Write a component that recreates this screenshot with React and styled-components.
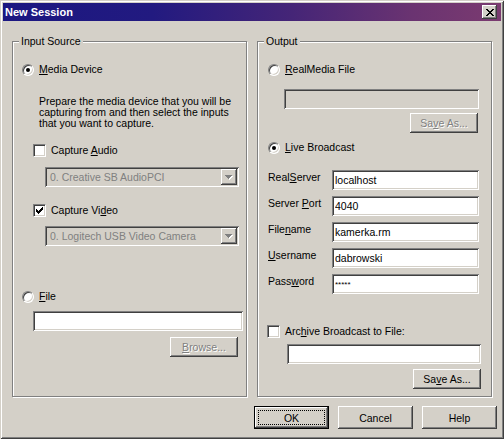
import React from "react";
import styled, { createGlobalStyle, css } from "styled-components";

const face = "#d4d0c8";
const shade = "#808080";
const dark = "#404040";
const light = "#ffffff";

const GlobalStyle = createGlobalStyle`
  html, body { margin: 0; padding: 0; background: ${face}; }
  body {
    font-family: "Liberation Sans", Arial, sans-serif;
    font-size: 10.5px;
    color: #000;
  }
  * { box-sizing: border-box; }
`;

const raised = css`
  background: ${face};
  box-shadow: inset -1px -1px 0 ${dark}, inset 1px 1px 0 ${light},
    inset -2px -2px 0 ${shade}, inset 2px 2px 0 ${face};
`;

const sunken = css`
  box-shadow: inset 1px 1px 0 ${shade}, inset -1px -1px 0 ${light},
    inset 2px 2px 0 ${dark}, inset -2px -2px 0 ${face};
`;

const disabledText = css`
  color: ${shade};
  text-shadow: 1px 1px 0 ${light};
`;

const Window = styled.div`
  width: 504px;
  height: 439px;
  padding: 3px;
  background: ${face};
  box-shadow: inset 1px 1px 0 ${face}, inset -1px -1px 0 ${dark},
    inset 2px 2px 0 ${light}, inset -2px -2px 0 ${shade};
  display: flex;
  flex-direction: column;
`;

const TitleBar = styled.div`
  height: 18px;
  flex: none;
  display: flex;
  align-items: center;
  justify-content: space-between;
  padding: 0 4px 0 2px;
  background: linear-gradient(
    90deg,
    #1b1781 0%,
    #221a80 30%,
    #452577 58%,
    #6a3371 82%,
    #7b3b70 100%
  );
`;

const Title = styled.span`
  color: #fff;
  font-weight: bold;
  font-size: 11px;
  line-height: 18px;
`;

const CloseButton = styled.span`
  ${raised};
  width: 15px;
  height: 14px;
  display: flex;
  align-items: center;
  justify-content: center;
`;

const Body = styled.div`
  display: flex;
  flex-direction: column;
  padding: 14px 9px 0 9px;
`;

const Groups = styled.div`
  display: flex;
  gap: 10px;
`;

const Group = styled.fieldset`
  width: 235px;
  height: 362px;
  margin: 0;
  padding: 0;
  min-width: 0;
  border: 1px solid ${shade};
  box-shadow: 1px 1px 0 ${light}, inset 1px 1px 0 ${light};
  display: flex;
  flex-direction: column;
  align-items: flex-start;
`;

const Legend = styled.legend`
  margin-left: 6px;
  padding: 0 2px;
  line-height: 13px;
  background: ${face};
`;

const OptionRow = styled.label`
  display: flex;
  align-items: center;
  gap: 5px;
  height: 13px;
  line-height: 13px;
  white-space: nowrap;
  margin: ${(p) => p.$top}px 0 0 ${(p) => p.$left}px;
`;

const Radio = styled.span`
  flex: none;
  width: 12px;
  height: 12px;
  border-radius: 50%;
  background: #fff;
  border: 1px solid;
  border-color: ${shade} ${light} ${light} ${shade};
  box-shadow: inset 1px 1px 0 ${dark}, inset -1px -1px 0 ${face};
  display: flex;
  align-items: center;
  justify-content: center;
  &::after {
    content: "";
    width: 4px;
    height: 4px;
    border-radius: 50%;
    background: #000;
    display: ${(p) => (p.$checked ? "block" : "none")};
  }
`;

const CheckBox = styled.span`
  flex: none;
  width: 13px;
  height: 13px;
  background: #fff;
  border: 1px solid;
  border-color: ${shade} ${light} ${light} ${shade};
  box-shadow: inset 1px 1px 0 ${dark}, inset -1px -1px 0 ${face};
  display: flex;
  align-items: center;
  justify-content: center;
`;

const Key = styled.u`
  text-decoration: underline;
  text-underline-offset: 1px;
`;

const Note = styled.p`
  margin: 20px 0 0 26px;
  line-height: 11px;
  white-space: nowrap;
`;

const Combo = styled.div`
  ${sunken};
  background: ${face};
  width: 194px;
  height: 20px;
  padding: 2px;
  margin: ${(p) => p.$top}px 0 0 32px;
  display: flex;
  align-items: center;
  color: ${shade};
`;

const ComboText = styled.span`
  flex: 1;
  padding-left: 3px;
  white-space: nowrap;
  overflow: hidden;
`;

const ComboArrow = styled.span`
  ${raised};
  flex: none;
  width: 16px;
  height: 16px;
  display: flex;
  align-items: center;
  justify-content: center;
`;

const TextField = styled.input`
  ${sunken};
  border: 0;
  outline: 0;
  width: ${(p) => p.$width}px;
  height: 20px;
  padding: 2px 3px 2px 3px;
  margin: ${(p) => p.$top || 0}px 0 0 ${(p) => p.$left || 0}px;
  font-family: inherit;
  font-size: ${(p) => (p.$small ? "8px" : "10.5px")};
  color: #000;
  background: ${(p) => (p.disabled ? face : "#fff")};
`;

const SmallButton = styled.button`
  ${raised};
  border: 0;
  width: 68px;
  height: 20px;
  padding: 0;
  font-family: inherit;
  font-size: 10.5px;
  margin: ${(p) => p.$top}px 0 0 ${(p) => p.$left}px;
  ${(p) => (p.disabled ? disabledText : "color: #000;")}
`;

const Fields = styled.div`
  display: grid;
  grid-template-columns: 64px 147px;
  row-gap: 6px;
  align-items: start;
  margin: 16px 0 0 10px;
`;

const FieldLabel = styled.label`
  line-height: 14px;
  white-space: nowrap;
`;

const ButtonRow = styled.div`
  display: flex;
  justify-content: flex-end;
  gap: 9px;
  margin: 9px -5px 0 0;
`;

const DialogButton = styled.button`
  ${raised};
  position: relative;
  border: 0;
  width: 75px;
  height: 23px;
  padding: 0;
  font-family: inherit;
  font-size: 10.5px;
  color: #000;
  ${(p) =>
    p.$default &&
    css`
      box-shadow: inset 0 0 0 1px #000, inset -2px -2px 0 ${dark},
        inset 2px 2px 0 ${light}, inset -3px -3px 0 ${shade};
      &::after {
        content: "";
        position: absolute;
        inset: 4px;
        border: 1px dotted #000;
      }
    `}
`;

const CloseGlyph = () => (
  <svg width="8" height="7" viewBox="0 0 8 7" shapeRendering="crispEdges">
    <path
      d="M0 0h2v1h-2z M6 0h2v1h-2z M1 1h2v1h-2z M5 1h2v1h-2z M2 2h4v1h-4z M3 3h2v1h-2z M2 4h4v1h-4z M1 5h2v1h-2z M5 5h2v1h-2z M0 6h2v1h-2z M6 6h2v1h-2z"
      fill="#000"
    />
  </svg>
);

const CheckMark = () => (
  <svg width="7" height="7" viewBox="0 0 7 7" shapeRendering="crispEdges">
    <path
      d="M0 2h1v3h-1z M1 3h1v3h-1z M2 4h1v3h-1z M3 3h1v3h-1z M4 2h1v3h-1z M5 1h1v3h-1z M6 0h1v3h-1z"
      fill="#000"
    />
  </svg>
);

const DownArrow = () => (
  <svg width="8" height="5" viewBox="0 0 8 5" shapeRendering="crispEdges">
    <path d="M1 1h7v1h-7z M2 2h5v1h-5z M3 3h3v1h-3z M4 4h1v1h-1z" fill="#fff" />
    <path d="M0 0h7v1h-7z M1 1h5v1h-5z M2 2h3v1h-3z M3 3h1v1h-1z" fill={shade} />
  </svg>
);

const fields = [
  { label: ["Real", "S", "erver"], value: "localhost" },
  { label: ["Server ", "P", "ort"], value: "4040" },
  { label: ["File", "n", "ame"], value: "kamerka.rm" },
  { label: ["", "U", "sername"], value: "dabrowski" },
  { label: ["Pass", "w", "ord"], value: "*****", small: true },
];

export default function App() {
  return (
    <>
      <GlobalStyle />
      <Window>
        <TitleBar>
          <Title>New Session</Title>
          <CloseButton>
            <CloseGlyph />
          </CloseButton>
        </TitleBar>
        <Body>
          <Groups>
            <Group>
              <Legend>Input Source</Legend>
              <OptionRow $top={15} $left={9}>
                <Radio $checked />
                <span>
                  <Key>M</Key>edia Device
                </span>
              </OptionRow>
              <Note>
                Prepare the media device that you will be
                <br />
                capturing from and then select the inputs
                <br />
                that you want to capture.
              </Note>
              <OptionRow $top={15} $left={20}>
                <CheckBox />
                <span>
                  Capture <Key>A</Key>udio
                </span>
              </OptionRow>
              <Combo $top={10}>
                <ComboText>0. Creative SB AudioPCI</ComboText>
                <ComboArrow>
                  <DownArrow />
                </ComboArrow>
              </Combo>
              <OptionRow $top={17} $left={20}>
                <CheckBox>
                  <CheckMark />
                </CheckBox>
                <span>
                  Capture Vi<Key>d</Key>eo
                </span>
              </OptionRow>
              <Combo $top={9}>
                <ComboText>0. Logitech USB Video Camera</ComboText>
                <ComboArrow>
                  <DownArrow />
                </ComboArrow>
              </Combo>
              <OptionRow $top={44} $left={9}>
                <Radio />
                <span>
                  <Key>F</Key>ile
                </span>
              </OptionRow>
              <TextField readOnly $width={210} $top={8} $left={20} defaultValue="" />
              <SmallButton disabled $top={6} $left={157}>
                <Key>B</Key>rowse...
              </SmallButton>
            </Group>

            <Group>
              <Legend>Output</Legend>
              <OptionRow $top={15} $left={10}>
                <Radio />
                <span>
                  <Key>R</Key>ealMedia File
                </span>
              </OptionRow>
              <TextField disabled readOnly $width={195} $top={13} $left={26} defaultValue="" />
              <SmallButton disabled $top={4} $left={152}>
                Sa<Key>v</Key>e As...
              </SmallButton>
              <OptionRow $top={8} $left={10}>
                <Radio $checked />
                <span>
                  <Key>L</Key>ive Broadcast
                </span>
              </OptionRow>
              <Fields>
                {fields.map((f) => (
                  <React.Fragment key={f.value}>
                    <FieldLabel>
                      {f.label[0]}
                      <Key>{f.label[1]}</Key>
                      {f.label[2]}
                    </FieldLabel>
                    <TextField readOnly $width={147} $small={f.small} defaultValue={f.value} />
                  </React.Fragment>
                ))}
              </Fields>
              <OptionRow $top={31} $left={9}>
                <CheckBox />
                <span>
                  Arc<Key>h</Key>ive Broadcast to File:
                </span>
              </OptionRow>
              <TextField readOnly $width={194} $top={6} $left={29} defaultValue="" />
              <SmallButton $top={5} $left={155}>
                Sa<Key>v</Key>e As...
              </SmallButton>
            </Group>
          </Groups>
          <ButtonRow>
            <DialogButton $default>OK</DialogButton>
            <DialogButton>Cancel</DialogButton>
            <DialogButton>Help</DialogButton>
          </ButtonRow>
        </Body>
      </Window>
    </>
  );
}
